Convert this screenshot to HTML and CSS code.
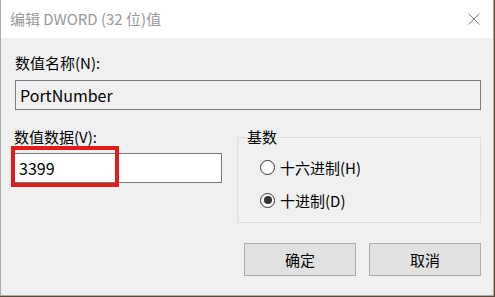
FILE: index.html
```html
<!DOCTYPE html>
<html lang="zh-CN">
<head>
  <meta charset="UTF-8" />
  <title>编辑 DWORD (32 位)值</title>
  <link rel="stylesheet" href="styles.css">
</head>
<body>

<div class="dialog">
  <div class="titlebar">
    <span class="title">编辑 DWORD (32 位)值</span>
    <svg class="close" width="12" height="12" viewBox="0 0 12 12">
      <path d="M0.5 0.5 L11.5 11.5 M11.5 0.5 L0.5 11.5" stroke="#7a7a7a" stroke-width="1" fill="none"/>
    </svg>
  </div>

  <div class="content">
    <div class="label label-first">数值名称(N):</div>
    <div class="field readonly">PortNumber</div>

    <div class="row">
      <div class="data-col">
        <div class="label">数值数据(V):</div>
        <div class="input-wrap">
          <div class="field value">3399</div>
          <div class="highlight"></div>
        </div>
      </div>

      <fieldset class="base-group">
        <legend>基数</legend>
        <label class="radio"><span class="dot"></span>十六进制(H)</label>
        <label class="radio checked"><span class="dot"></span>十进制(D)</label>
      </fieldset>
    </div>

    <div class="buttons">
      <button class="btn">确定</button>
      <button class="btn">取消</button>
    </div>
  </div>
</div>

</body>
</html>
```

FILE: styles.css
```css
* { box-sizing: border-box; }

body {
  margin: 0;
  background: #5e4c38;
  font-family: "Noto Sans CJK SC", sans-serif;
  font-size: 15px;
  color: #000;
}

.dialog {
  width: 494px;
  height: 296px;
  background: #f0f0f0;
  border: 1px solid #aaa;
  border-top: none;
  display: flex;
  flex-direction: column;
}

.titlebar {
  height: 38px;
  background: #fff;
  display: flex;
  align-items: center;
  justify-content: space-between;
  padding: 0 13px 0 9px;
}

.title {
  color: #999;
  font-size: 15px;
  line-height: 20px;
}

.content {
  padding: 0 12px 0 14px;
}

.label {
  line-height: 20px;
}

.label-first {
  margin-top: 15px;
}

.field {
  border: 1px solid #7a7a7a;
  height: 30px;
  line-height: 28px;
  padding-left: 4px;
  font-size: 16px;
}

.readonly {
  margin-top: 7px;
  background: #f0f0f0;
}

.row {
  display: flex;
  justify-content: space-between;
  margin-top: 17px;
}

.data-col {
  width: 208px;
  margin-left: -1px;
}

.input-wrap {
  position: relative;
  margin-top: 6px;
}

.value {
  background: #fff;
}

.highlight {
  position: absolute;
  left: -3px;
  top: -7px;
  width: 108px;
  height: 41px;
  border: 4px solid #e41b1b;
}

.base-group {
  width: 244px;
  height: 96px;
  margin: 0;
  padding: 0 0 10px 0;
  border: 1px solid #dcdcdc;
  display: flex;
  flex-direction: column;
  gap: 11px;
}

.base-group legend {
  margin-left: 8px;
  padding: 0 1px;
  line-height: 20px;
}

.radio {
  display: flex;
  align-items: center;
  height: 22px;
  padding-left: 22px;
  gap: 5px;
}

.radio:first-of-type {
  margin-top: 9px;
}

.dot {
  width: 15px;
  height: 15px;
  border: 1px solid #333;
  border-radius: 50%;
  background: #fff;
  display: flex;
  align-items: center;
  justify-content: center;
}

.checked .dot::after {
  content: "";
  width: 8px;
  height: 8px;
  border-radius: 50%;
  background: #333;
}

.buttons {
  display: flex;
  justify-content: flex-end;
  gap: 13px;
  margin-top: 20px;
}

.btn {
  width: 112px;
  height: 33px;
  background: #e1e1e1;
  border: 1px solid #adadad;
  font-family: inherit;
  font-size: 15px;
  color: #000;
  padding: 0;
}
```
